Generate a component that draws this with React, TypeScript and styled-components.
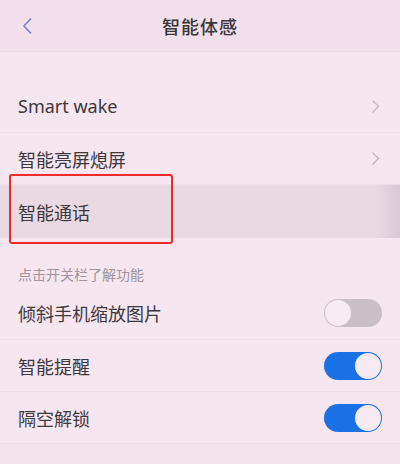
import styled, { createGlobalStyle } from 'styled-components';

const GlobalStyle = createGlobalStyle`
    body {
        margin: 0;
        background: #f6e6f0;
        font-family: "Noto Sans", "Noto Sans CJK SC", sans-serif;
    }
`;

const Screen = styled.div`
    width: 400px;
    height: 464px;
    overflow: hidden;
    background: #f6e6f0;
    display: flex;
    flex-direction: column;
`;

const Header = styled.header`
    height: 52px;
    box-sizing: border-box;
    flex-shrink: 0;
    display: flex;
    align-items: center;
    justify-content: center;
    position: relative;
    background: #f1dfeb;
    border-bottom: 1px solid #eadbe5;
`;

const BackButton = styled.div`
    position: absolute;
    left: 19px;
    top: 17px;
    width: 18px;
    height: 18px;
`;

const Title = styled.h1`
    margin: 0;
    font-size: 18px;
    font-weight: 500;
    color: #3a3639;
    letter-spacing: 1px;
`;

const Spacer = styled.div<{ $h: number }>`
    height: ${(p) => p.$h}px;
    flex-shrink: 0;
`;

const Row = styled.div<{ $pressed?: boolean; $h?: number }>`
    height: ${(p) => p.$h ?? 52}px;
    box-sizing: border-box;
    flex-shrink: 0;
    display: flex;
    align-items: center;
    justify-content: space-between;
    padding: 0 18px;
    position: relative;
    background: ${(p) =>
        p.$pressed
            ? 'linear-gradient(90deg, #e8d9e3 0%, #e8d9e3 94%, #d8c8d3 100%)'
            : 'transparent'};

    & + & {
        border-top: 1px solid #ecdde7;
    }
`;

const Label = styled.span`
    font-size: 18px;
    color: #3d393c;
`;

const Chevron = styled.svg`
    width: 9px;
    height: 15px;
    margin-right: 2px;
`;

// red annotation frame drawn over the pressed row
const Highlight = styled.div`
    position: absolute;
    left: 9px;
    top: -11px;
    width: 160px;
    height: 66px;
    border: 2px solid #ef2a2a;
    border-radius: 3px;
`;

const SectionLabel = styled.div`
    height: 49px;
    flex-shrink: 0;
    padding: 0 18px 2px;
    display: flex;
    align-items: flex-end;
    box-sizing: border-box;
    font-size: 14px;
    line-height: 20px;
    color: #a0959d;
`;

const Toggle = styled.div<{ $on: boolean }>`
    width: 58px;
    height: 28px;
    border-radius: 14px;
    box-sizing: border-box;
    background: ${(p) => (p.$on ? '#1a72e6' : '#cbbfc7')};
    display: flex;
    justify-content: ${(p) => (p.$on ? 'flex-end' : 'flex-start')};
    align-items: center;
    padding: 1px;
`;

const Knob = styled.div`
    width: 26px;
    height: 26px;
    border-radius: 50%;
    background: #f8eaf3;
`;

const Footer = styled.div`
    flex: 1;
    background: #f2e2ec;
    border-top: 1px solid #ecdde7;
`;

const ChevronIcon = () => (
    <Chevron viewBox="0 0 9 15">
        <path d="M1.5 1.5 L7.5 7.5 L1.5 13.5" fill="none" stroke="#c2b7bf" strokeWidth="1.3" />
    </Chevron>
);

const switches = [
    { label: '倾斜手机缩放图片', on: false },
    { label: '智能提醒', on: true },
    { label: '隔空解锁', on: true },
];

export default function App() {
    return (
        <Screen>
            <GlobalStyle />
            <Header>
                <BackButton>
                    <svg width="18" height="18" viewBox="0 0 18 18">
                        <path d="M12 1.5 L5 9 L12 16.5" fill="none" stroke="#7b80cf" strokeWidth="1.6" />
                    </svg>
                </BackButton>
                <Title>智能体感</Title>
            </Header>
            <Spacer $h={28} />
            <Row>
                <Label>Smart wake</Label>
                <ChevronIcon />
            </Row>
            <Row>
                <Label>智能亮屏熄屏</Label>
                <ChevronIcon />
            </Row>
            <Row $pressed $h={54}>
                <Label>智能通话</Label>
                <Highlight />
            </Row>
            <SectionLabel>点击开关栏了解功能</SectionLabel>
            {switches.map((s) => (
                <Row key={s.label}>
                    <Label>{s.label}</Label>
                    <Toggle $on={s.on}>
                        <Knob />
                    </Toggle>
                </Row>
            ))}
            <Footer />
        </Screen>
    );
}
